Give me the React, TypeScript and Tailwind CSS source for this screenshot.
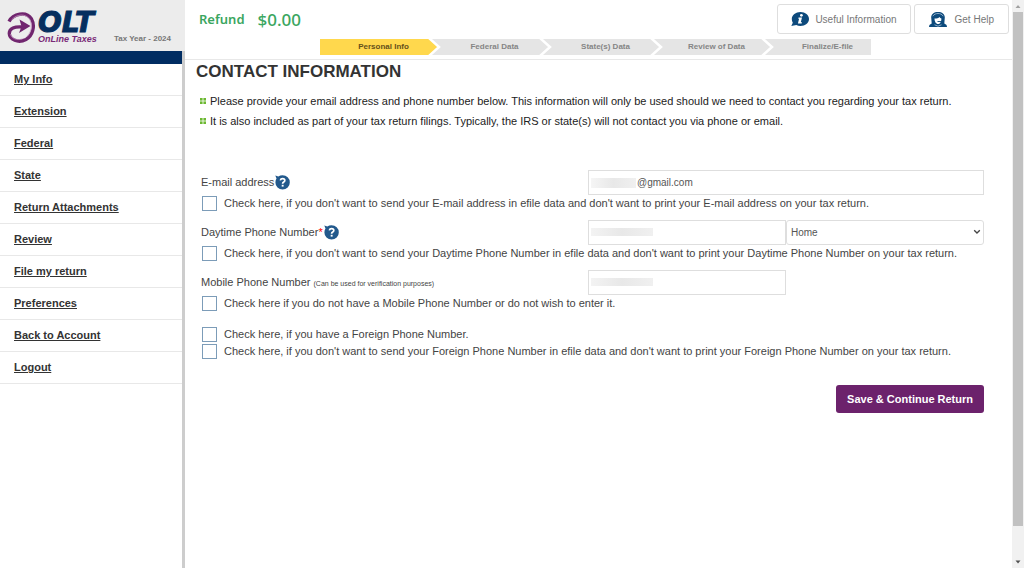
import { useState } from 'react';
import type { ReactNode } from 'react';

const NAV_ITEMS = [
  'My Info',
  'Extension',
  'Federal',
  'State',
  'Return Attachments',
  'Review',
  'File my return',
  'Preferences',
  'Back to Account',
  'Logout',
];

const STEPS = ['Personal Info', 'Federal Data', 'State(s) Data', 'Review of Data', 'Finalize/E-file'];

function LogoMark() {
  return (
    <svg viewBox="0 0 29 32" className="h-8 w-[29px]" fill="none">
      <path
        d="M2 9.500C6 2 19-1.500 24.500 7c4 7 1 17-5.500 20.500C11 31.500 2.500 27.500 2.300 21.500 2.200 16 8 14.500 15 15"
        stroke="#71266f"
        strokeWidth="3.400"
      />
      <path d="M12.500 7.500 23.500 14 12 21l2.500-6.500z" fill="#71266f" />
      <path d="M4.500 8C10 1.500 19 1.500 22.800 7.500c3 6 1.500 13-3 17" stroke="#c49bc2" strokeWidth=".8" />
      <path d="M3.500 22c.8 5 7 6.500 12 5" stroke="#b584b3" strokeWidth=".8" />
    </svg>
  );
}

function InfoIcon() {
  return (
    <svg viewBox="0 0 18 15" className="h-[15px] w-[18px]">
      <path d="M9.500 0C14.200 0 18 3 18 7s-3.800 7-8.500 7c-1.600 0-3-.3-4.200-.9L.3 14l1.500-3.200C1.100 9.700.8 8.400.8 7 .8 3 4.800 0 9.500 0z" fill="#0d4a7c" />
      <circle cx="10.400" cy="3.300" r="1.400" fill="#fff" />
      <path d="M7.600 5.400h3.400l-1.200 4.800h1.200l-.3 1.300H6.900l1.200-4.800H7.200z" fill="#fff" />
    </svg>
  );
}

function AgentIcon() {
  return (
    <svg viewBox="0 0 18 15" className="h-[15px] w-[18px]">
      <path d="M2.200 5.500C2.200 2 5 0 9 0s6.800 2 6.800 5.500l-.5 6 2 1.200c.4.400.7 1.200.7 2.300H0c0-1.100.3-1.900.7-2.300l2-1.200z" fill="#0d4a7c" />
      <path d="M3.800 4.200C5 2.200 7 1.500 9 1.500s4 .7 5.200 2.700" fill="none" stroke="#a9c3d8" strokeWidth=".8" />
      <path d="M5.500 6.500c2 .1 4-.5 5-1.600.4.800 1 1.300 1.900 1.500 0 3.200-1.400 5.600-3.400 5.600S5.500 9.500 5.500 6.500z" fill="#fff" />
      <path d="M8.500 9.500h4" stroke="#0d4a7c" strokeWidth=".9" />
      <path d="M5.500 12.800 9 14.200l3.500-1.400" fill="none" stroke="#c9d9e6" strokeWidth=".7" />
    </svg>
  );
}

function HelpButton({ label }: { label: string }) {
  return (
    <button type="button" aria-label={label} className="shrink-0">
      <svg viewBox="0 0 15 15" className="block h-[15px] w-[15px]">
        <path d="M.3.6l3 .8C4.500.6 6 .2 7.600.2a7.200 7.200 0 1 1-7.200 7.200c0-1.500.4-2.900 1.100-4z" fill="#22598c" />
        <path d="M5.300 5.400C5.600 4.200 6.500 3.700 7.600 3.700c1.300 0 2.200.7 2.200 1.800 0 1.600-2.200 1.500-2.200 3.200" fill="none" stroke="#fff" strokeWidth="1.700" />
        <rect x="6.700" y="9.800" width="1.900" height="1.800" fill="#fff" />
      </svg>
    </button>
  );
}

function Bullet() {
  return (
    <svg viewBox="0 0 6 6" className="h-[6px] w-[6px] shrink-0" fill="#6cb832">
      <rect width="2.600" height="2.600" />
      <rect x="3.400" width="2.600" height="2.600" />
      <rect y="3.400" width="2.600" height="2.600" />
      <rect x="3.400" y="3.400" width="2.600" height="2.600" />
    </svg>
  );
}

function Sidebar() {
  return (
    <aside className="flex w-[185px] shrink-0 flex-col">
      <div className="flex h-[51px] items-end gap-[2px] bg-[#ececec] pb-[7px] pl-[7px]">
        <LogoMark />
        <div className="flex flex-col">
          <span className="h-[23px] font-['DejaVu_Sans'] text-[28px] leading-[23px] font-bold italic text-[#052f5f] [-webkit-text-stroke:1px_#052f5f]">
            OLT
          </span>
          <span className="h-[10px] text-[9px] leading-[10px] font-bold italic whitespace-nowrap text-[#7a2a78]">
            OnLine Taxes
          </span>
        </div>
        <span className="ml-auto pr-[14px] text-[8px] leading-[10px] font-bold whitespace-nowrap text-[#777]">
          Tax Year - 2024
        </span>
      </div>
      <nav className="flex-1 border-r-3 border-[#cdcdcd]">
        <div className="h-[13px] bg-[#012d62]" />
        <ul>
          {NAV_ITEMS.map((item) => (
            <li key={item} className="flex h-8 items-center border-b border-[#e8e8e8] pl-[14px]">
              <a href="#" className="text-[11px] font-bold text-[#333] underline">
                {item}
              </a>
            </li>
          ))}
        </ul>
      </nav>
    </aside>
  );
}

function StepArrow({ active }: { active: boolean }) {
  return (
    <svg viewBox="0 0 16 16" className="absolute top-0 -left-1 h-4 w-4">
      <path d="M0 0h3l9 8-9 8H0z" fill={active ? '#ffd84d' : '#e5e5e5'} />
      <path d="M2 -1l10 9-10 9" fill="none" stroke="#fff" strokeWidth="2.500" />
    </svg>
  );
}

function Header() {
  return (
    <header className="border-b border-[#e8e8e8] pb-1">
      <div className="flex h-[39px] items-start">
        <div className="flex h-10 items-center gap-[13px] pl-[14px] font-['Noto_Sans'] font-semibold text-[#3aa660]">
          <span className="text-[13px]">Refund</span>
          <span className="text-[17px] font-medium">$0.00</span>
        </div>
        <div className="ml-auto flex gap-[3px] pt-1 pr-[3px] text-[10px] text-[#777]">
          <button type="button" className="flex h-[30px] items-center gap-[6px] rounded-[3px] border border-[#dedede] px-[13px]">
            <InfoIcon />
            Useful Information
          </button>
          <button type="button" className="flex h-[30px] items-center gap-2 rounded-[3px] border border-[#dedede] px-[14px]">
            <AgentIcon />
            Get Help
          </button>
        </div>
      </div>
      <ol className="mr-[141px] ml-[135px] grid grid-cols-[111fr_111fr_111fr_111fr_107fr]">
        {STEPS.map((step, i) => (
          <li
            key={step}
            className={
              i === 0
                ? 'relative flex h-4 items-center justify-center bg-[#ffd84d] pl-4 text-[8px] font-bold text-[#65511a]'
                : 'relative flex h-4 items-center justify-center bg-[#e5e5e5] pl-4 text-[8px] font-bold text-[#858585] last:pl-5'
            }
          >
            {i > 0 && <StepArrow active={i === 1} />}
            {step}
          </li>
        ))}
      </ol>
    </header>
  );
}

function CheckRow({ children }: { children: ReactNode }) {
  return (
    <label className="flex h-[15px] items-center gap-[7px] pl-px whitespace-nowrap">
      <input
        type="checkbox"
        className="h-[15px] w-[15px] shrink-0 appearance-none border border-[#7c9cb8] bg-white checked:bg-[#22598c]"
      />
      {children}
    </label>
  );
}

function Redacted() {
  return <span className="absolute top-2 left-[3px] h-2 w-[62px] bg-linear-to-r from-[#f3f3f3] via-[#e8e8e8] to-[#f0f0f0]" />;
}

const fieldClass = 'h-[25px] w-full border border-[#dedede] bg-white text-[10px] text-[#555] outline-none';
const rowClass = 'grid h-[25px] grid-cols-[387fr_396fr] items-center';

function ContactForm() {
  const [phoneType, setPhoneType] = useState('Home');

  return (
    <form className="mt-[39px] pr-7 pl-4 text-[11px] leading-[15px] text-[#444]" onSubmit={(e) => e.preventDefault()}>
      <div className="flex flex-col gap-[9px]">
        <div className="flex flex-col gap-px">
          <div className={rowClass}>
            <div className="flex items-center gap-px">
              <label htmlFor="email">E-mail address</label>
              <HelpButton label="E-mail help" />
            </div>
            <div className="relative">
              <input id="email" defaultValue="@gmail.com" className={`${fieldClass} pl-12`} />
              <span className="absolute top-2 left-[3px] h-[10px] w-[45px] bg-linear-to-r from-[#f5f5f5] via-[#e8e8e8] to-[#f0f0f0]" />
            </div>
          </div>
          <CheckRow>
            Check here, if you don't want to send your E-mail address in efile data and don't want to print your E-mail
            address on your tax return.
          </CheckRow>
        </div>

        <div className="flex flex-col gap-px">
          <div className={rowClass}>
            <div className="flex items-center gap-px">
              <label htmlFor="daytime">
                Daytime Phone Number<span className="text-[#f00]">*</span>
              </label>
              <HelpButton label="Daytime phone help" />
            </div>
            <div className="grid grid-cols-2">
              <div className="relative">
                <input id="daytime" type="tel" className={fieldClass} />
                <Redacted />
              </div>
              <div className="relative">
                <select
                  aria-label="Phone type"
                  value={phoneType}
                  onChange={(e) => setPhoneType(e.target.value)}
                  className={`${fieldClass} appearance-none rounded-[3px] pl-1`}
                >
                  <option>Home</option>
                  <option>Work</option>
                </select>
                <svg viewBox="0 0 8 6" className="pointer-events-none absolute top-[9px] right-[3px] h-[6px] w-2">
                  <path d="M1.200 1.200 4 4l2.800-2.800" fill="none" stroke="#444" strokeWidth="1.300" />
                </svg>
              </div>
            </div>
          </div>
          <CheckRow>
            Check here, if you don't want to send your Daytime Phone Number in efile data and don't want to print your
            Daytime Phone Number on your tax return.
          </CheckRow>
        </div>

        <div className="flex flex-col gap-px">
          <div className={rowClass}>
            <label htmlFor="mobile">
              Mobile Phone Number <span className="text-[7px]">(Can be used for verification purposes)</span>
            </label>
            <div className="relative w-1/2">
              <input id="mobile" type="tel" className={fieldClass} />
              <Redacted />
            </div>
          </div>
          <CheckRow>Check here if you do not have a Mobile Phone Number or do not wish to enter it.</CheckRow>
        </div>
      </div>

      <div className="mt-4 flex flex-col gap-[2px]">
        <CheckRow>Check here, if you have a Foreign Phone Number.</CheckRow>
        <CheckRow>
          Check here, if you don't want to send your Foreign Phone Number in efile data and don't want to print your
          Foreign Phone Number on your tax return.
        </CheckRow>
      </div>

      <div className="mt-[26px] flex justify-end">
        <button type="submit" className="h-7 rounded-[3px] bg-[#6c226c] px-[11px] text-[11px] font-bold text-white">
          Save &amp; Continue Return
        </button>
      </div>
    </form>
  );
}

// Classic square scroll bar along the right edge of the window
function ScrollTrack() {
  return (
    <div aria-hidden="true" className="flex w-3 shrink-0 flex-col items-center bg-[#f1f1f1]">
      <svg viewBox="0 0 12 12" className="h-3 w-3">
        <path d="M3.500 8 6 5l2.500 3z" fill="#a0a0a0" />
      </svg>
      <div className="w-[10px] flex-[514] bg-[#c1c1c1]" />
      <div className="flex-[30]" />
      <svg viewBox="0 0 12 12" className="h-3 w-3">
        <path d="M3.500 4.500 6 7.500l2.500-3z" fill="#505050" />
      </svg>
    </div>
  );
}

export default function App() {
  return (
    <div className="flex min-h-screen bg-white font-['Liberation_Sans',Arial,sans-serif]">
      <Sidebar />
      <main className="min-w-0 flex-1">
        <Header />
        <h1 className="pl-[11px] text-[17px] leading-6 font-bold text-[#333]">CONTACT INFORMATION</h1>
        <ul className="mt-[7px] pl-[15px] text-[11px] leading-5 text-[#222]">
          <li className="flex items-center gap-1">
            <Bullet />
            Please provide your email address and phone number below. This information will only be used should we need
            to contact you regarding your tax return.
          </li>
          <li className="flex items-center gap-1">
            <Bullet />
            It is also included as part of your tax return filings. Typically, the IRS or state(s) will not contact you
            via phone or email.
          </li>
        </ul>
        <ContactForm />
      </main>
      <ScrollTrack />
    </div>
  );
}
